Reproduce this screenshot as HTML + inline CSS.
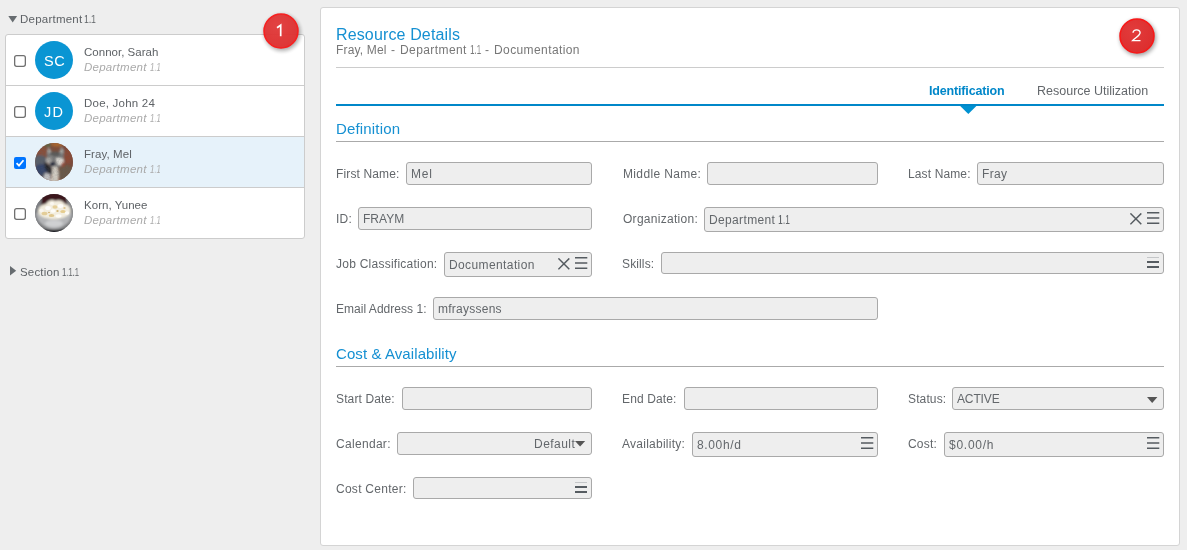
<!DOCTYPE html>
<html><head><meta charset="utf-8"><title>Resource Details</title>
<style>
*{box-sizing:border-box;margin:0;padding:0}
html,body{width:1187px;height:550px;overflow:hidden;background:#eee;font-family:"Liberation Sans",sans-serif}
.a{position:absolute;display:block}
.t{position:absolute;white-space:nowrap;line-height:1;will-change:transform}
.inp{position:absolute;background:#eee;border:1px solid #a9a9a9;border-radius:3px}
#list{left:5px;top:34px;width:300px;height:205px;background:#fff;border:1px solid #ccc;border-radius:3px}
.sep{position:absolute;left:6px;width:298px;height:1px;background:#ccc}
.cb{position:absolute;left:14px;width:12px;height:12px;border:1px solid #767676;border-radius:2.5px;background:#fff}
.av{position:absolute;left:35px;width:38px;height:38px;border-radius:50%;background:#0a95d3}
#panel{left:320px;top:7px;width:860px;height:539px;background:#fff;border:1px solid #d4d4d4;border-radius:3px}
</style></head><body>
<div class="a" id="list"></div>
<div class="a" style="left:6px;top:137px;width:298px;height:50px;background:#e6f2fa"></div>
<div class="sep" style="top:85px"></div><div class="sep" style="top:136px"></div><div class="sep" style="top:187px"></div>
<svg class="a" style="left:14px;top:55px" width="12" height="12"><rect x=".65" y=".65" width="10.7" height="10.7" rx="2" fill="#fff" stroke="#707070" stroke-width="1.3"/></svg><svg class="a" style="left:14px;top:106px" width="12" height="12"><rect x=".65" y=".65" width="10.7" height="10.7" rx="2" fill="#fff" stroke="#707070" stroke-width="1.3"/></svg><svg class="a" style="left:14px;top:208px" width="12" height="12"><rect x=".65" y=".65" width="10.7" height="10.7" rx="2" fill="#fff" stroke="#707070" stroke-width="1.3"/></svg>
<svg class="a" style="left:14px;top:157px" width="12" height="12" viewBox="0 0 13 13"><rect width="13" height="13" rx="2.2" fill="#0075ff"/><path d="M2.8 6.6l2.6 2.7 4.9-5.8" stroke="#fff" stroke-width="1.9" fill="none"/></svg>
<div class="av" style="top:41px"></div><div class="av" style="top:92px"></div>
<svg class="a" style="left:35px;top:143px" width="38" height="38" viewBox="0 0 38 38">
<defs><clipPath id="cw"><circle cx="19" cy="19" r="18.9"/></clipPath><filter id="fw" x="-20%" y="-20%" width="140%" height="140%"><feGaussianBlur stdDeviation="1"/></filter>
<filter id="nw"><feTurbulence type="fractalNoise" baseFrequency="0.6" numOctaves="2" seed="4"/><feColorMatrix values="0 0 0 0 0.12  0 0 0 0 0.12  0 0 0 0 0.14  1.6 0 0 0 -0.55"/></filter>
<filter id="nl"><feTurbulence type="fractalNoise" baseFrequency="0.7" numOctaves="2" seed="11"/><feColorMatrix values="0 0 0 0 0.95  0 0 0 0 0.93  0 0 0 0 0.88  1.6 0 0 0 -0.62"/></filter></defs>
<g clip-path="url(#cw)"><rect width="38" height="38" fill="#7d4d39"/>
<g filter="url(#fw)">
<rect x="26" y="0" width="14" height="40" fill="#7b4a38"/>
<ellipse cx="22" cy="1.5" rx="6" ry="2.6" fill="#a8652f"/>
<ellipse cx="13" cy="2" rx="3" ry="2" fill="#5e6440"/>
<ellipse cx="7" cy="9" rx="6" ry="5" fill="#88503a"/>
<ellipse cx="31" cy="30" rx="8" ry="8" fill="#6b5846"/>
<ellipse cx="33" cy="13" rx="4" ry="8" fill="#8c4a36"/>
<ellipse cx="5" cy="18" rx="7" ry="6" fill="#595e69"/>
<ellipse cx="6" cy="27" rx="7" ry="6" fill="#36456a"/>
<ellipse cx="11" cy="33" rx="5" ry="4" fill="#4a5265"/>
<path d="M12 8l2-4 3 5 7 0 2.500-5 2.500 3-.5 8-1 6-5 5-6-1-5-7z" fill="#7b7c7c"/>
<path d="M13 4l3 5-3 1.500zM26.500 4l2 6-3.500-.5z" fill="#b4b3ad"/>
<ellipse cx="20" cy="11" rx="5" ry="2.500" fill="#5a5a59"/>
<ellipse cx="16" cy="14" rx="2.500" ry="1.300" fill="#8a8a88"/>
<path d="M11 15l4 0 2 4-3 2-3-2z" fill="#aeaca7"/><path d="M21 15l7 .5 1 4-4 3-3-2z" fill="#e6e2da"/>
<ellipse cx="17.600" cy="21" rx="2.500" ry="2.100" fill="#0e1430"/>
<path d="M9 19l4 2 5 6 1 5-3 0-6-6z" fill="#26262b"/>
<path d="M17.500 23.500l4.500 0 1.500 5 0 12h-8l1-6 .5-5z" fill="#d4cfc4"/>
<path d="M10 30l5 1 1 8-9 0z" fill="#c4c4c6"/>
<ellipse cx="28" cy="21.500" rx="1.600" ry="2.300" fill="#9e4932"/>
</g>
<rect width="38" height="38" filter="url(#nw)" opacity=".3"/>
</g></svg>
<svg class="a" style="left:35px;top:194px" width="38" height="38" viewBox="0 0 38 38">
<defs><clipPath id="cp"><circle cx="19" cy="19" r="18.9"/></clipPath><filter id="fp" x="-20%" y="-20%" width="140%" height="140%"><feGaussianBlur stdDeviation="0.9"/></filter>
<filter id="fq" x="-20%" y="-20%" width="140%" height="140%"><feGaussianBlur stdDeviation="0.6"/></filter></defs>
<g clip-path="url(#cp)"><rect width="38" height="38" fill="#77787a"/>
<g filter="url(#fp)">
<path d="M7 -2h24l1 14h-26z" fill="#3a161b"/>
<path d="M-2 4h8l1 26h-9z" fill="#7d7f83"/>
<path d="M32 4h8v26h-9z" fill="#848587"/>
<path d="M1 19c2 12 11 16 18 16s16-4 18-16z" fill="#b4b5b7"/>
<ellipse cx="19" cy="29.500" rx="9" ry="3.500" fill="#cfd0d2"/>
<path d="M3 34c6 2.500 26 2.500 32 0v6h-32z" fill="#19181a"/>
<path d="M3 18c0-5 4-8 8-8 2-4 7-5 9-3 4-2 8 0 10 3 4 1 6 4 5.500 8-3 6-10 7-16.500 7s-14-1-16-7z" fill="#f3eedf"/>
</g>
<g filter="url(#fq)">
<ellipse cx="9.500" cy="19.500" rx="3" ry="1.800" fill="#e3cd98"/>
<ellipse cx="20" cy="13" rx="2.600" ry="1.700" fill="#e6d09a"/>
<ellipse cx="28" cy="17.500" rx="2.800" ry="1.500" fill="#e5cc8d"/>
<ellipse cx="16.500" cy="21.500" rx="2.800" ry="1.600" fill="#e0c88f"/>
<ellipse cx="23.500" cy="22" rx="3" ry="1.700" fill="#fdfcf8"/>
<ellipse cx="13" cy="14" rx="2.800" ry="2" fill="#fefdfa"/>
<ellipse cx="25.500" cy="12" rx="2.800" ry="1.900" fill="#fefdfa"/>
<ellipse cx="32" cy="19" rx="2.200" ry="1.800" fill="#fcfaf5"/>
<ellipse cx="6.500" cy="16.500" rx="2" ry="1.700" fill="#f9f6ef"/>
<ellipse cx="18" cy="17" rx="2.600" ry="1.700" fill="#fefdf9"/>
<ellipse cx="17" cy="9.500" rx="2" ry="1.500" fill="#fbf8f0"/>
<ellipse cx="22.500" cy="17" rx="1.200" ry=".9" fill="#d2b473"/>
<ellipse cx="14" cy="18.500" rx="1.100" ry=".8" fill="#d6ba7e"/>
<ellipse cx="29.500" cy="14" rx="1.200" ry=".9" fill="#dfc794"/>
</g>
</g></svg>
<svg class="a" style="left:8px;top:16px" width="10" height="8"><path d="M0.3 0h8.8l-4.4 6.4z" fill="#676c70"/></svg>
<svg class="a" style="left:10px;top:266px" width="8" height="11"><path d="M0 0v9.4l6.2-4.7z" fill="#676c70"/></svg>
<div class="a" id="panel"></div>
<div class="a" style="left:336px;top:67px;width:828px;height:1px;background:#ccc"></div>
<div class="a" style="left:336px;top:104px;width:828px;height:2px;background:#0087c9"></div>
<svg class="a" style="left:959.6px;top:106px" width="17" height="9"><path d="M.2 0h16.2l-8.1 8z" fill="#0091d1"/></svg>
<div class="a" style="left:336px;top:141px;width:828px;height:1px;background:#aaa"></div>
<div class="a" style="left:336px;top:366px;width:828px;height:1px;background:#aaa"></div>
<div class="inp" style="left:406px;top:162px;width:186px;height:23px"></div><div class="inp" style="left:707px;top:162px;width:171px;height:23px"></div><div class="inp" style="left:977px;top:162px;width:187px;height:23px"></div><div class="inp" style="left:358px;top:207px;width:234px;height:23px"></div><div class="inp" style="left:704px;top:207px;width:460px;height:25px"></div><div class="inp" style="left:444px;top:252px;width:148px;height:25px"></div><div class="inp" style="left:661px;top:252px;width:503px;height:22px"></div><div class="inp" style="left:433px;top:297px;width:445px;height:23px"></div><div class="inp" style="left:402px;top:387px;width:190px;height:23px"></div><div class="inp" style="left:684px;top:387px;width:194px;height:23px"></div><div class="inp" style="left:952px;top:387px;width:212px;height:23px"></div><div class="inp" style="left:397px;top:432px;width:195px;height:23px"></div><div class="inp" style="left:692px;top:432px;width:186px;height:25px"></div><div class="inp" style="left:944px;top:432px;width:220px;height:25px"></div><div class="inp" style="left:413px;top:477px;width:179px;height:22px"></div>
<svg class="a" style="left:1130.2px;top:213.2px" width="12" height="12" viewBox="0 0 12 12"><path d="M.4 .4L11.3 11.3M11.3 .4L.4 11.3" stroke="#555b60" stroke-width="1.5" fill="none"/></svg><svg class="a" style="left:1147px;top:211.8px" width="13" height="14" viewBox="0 0 13 14"><path d="M0 .75h12.3M0 6h12.3M0 11.3h12.3" stroke="#555b60" stroke-width="1.6" fill="none"/></svg><svg class="a" style="left:557.9px;top:258.4px" width="12" height="12" viewBox="0 0 12 12"><path d="M.4 .4L11.3 11.3M11.3 .4L.4 11.3" stroke="#555b60" stroke-width="1.5" fill="none"/></svg><svg class="a" style="left:574.7px;top:257.2px" width="13" height="14" viewBox="0 0 13 14"><path d="M0 .75h12.3M0 6h12.3M0 11.3h12.3" stroke="#555b60" stroke-width="1.6" fill="none"/></svg><svg class="a" style="left:1147px;top:257px" width="13" height="12" viewBox="0 0 13 12"><path d="M0 .5h12" stroke="#c4c6c8" stroke-width="1"/><path d="M0 4.9h12M0 10h12" stroke="#565c61" stroke-width="2" fill="none"/></svg><svg class="a" style="left:1147.2px;top:396.5px" width="11.4" height="7"><path d="M0 0h10.4l-5.2 6z" fill="#555"/></svg><svg class="a" style="left:575.3px;top:441.2px" width="11.2" height="6.6"><path d="M0 0h10.2l-5.1 5.6z" fill="#555"/></svg><svg class="a" style="left:860.6px;top:437.3px" width="13" height="14" viewBox="0 0 13 14"><path d="M0 .75h12.3M0 6h12.3M0 11.3h12.3" stroke="#555b60" stroke-width="1.6" fill="none"/></svg><svg class="a" style="left:1146.8px;top:437.3px" width="13" height="14" viewBox="0 0 13 14"><path d="M0 .75h12.3M0 6h12.3M0 11.3h12.3" stroke="#555b60" stroke-width="1.6" fill="none"/></svg><svg class="a" style="left:575px;top:482px" width="13" height="12" viewBox="0 0 13 12"><path d="M0 .5h12" stroke="#c4c6c8" stroke-width="1"/><path d="M0 4.9h12M0 10h12" stroke="#565c61" stroke-width="2" fill="none"/></svg>
<div class="t" style="left:20px;top:14.27px;font-size:11.5px;color:#5e6266;letter-spacing:0.234px;">Department</div><div class="t" style="left:84.03px;top:14.27px;font-size:11.5px;color:#5e6266;transform:scaleX(0.745);transform-origin:0 0;">1.1</div><div class="t" style="left:84px;top:47.27px;font-size:11.5px;color:#5e6266;letter-spacing:0.011px;">Connor, Sarah</div><div class="t" style="left:84px;top:98.27px;font-size:11.5px;color:#5e6266;letter-spacing:0.225px;">Doe, John 24</div><div class="t" style="left:84px;top:149.27px;font-size:11.5px;color:#5e6266;letter-spacing:0.078px;">Fray, Mel</div><div class="t" style="left:84px;top:200.27px;font-size:11.5px;color:#5e6266;letter-spacing:0.031px;">Korn, Yunee</div><div class="t" style="left:84px;top:62.27px;font-size:11.5px;color:#aaa;letter-spacing:0.256px;font-style:italic;">Department</div><div class="t" style="left:150.30px;top:62.27px;font-size:11.5px;color:#aaa;transform:scaleX(0.673);transform-origin:0 0;font-style:italic;">1.1</div><div class="t" style="left:84px;top:113.27px;font-size:11.5px;color:#aaa;letter-spacing:0.256px;font-style:italic;">Department</div><div class="t" style="left:150.30px;top:113.27px;font-size:11.5px;color:#aaa;transform:scaleX(0.673);transform-origin:0 0;font-style:italic;">1.1</div><div class="t" style="left:84px;top:164.27px;font-size:11.5px;color:#aaa;letter-spacing:0.256px;font-style:italic;">Department</div><div class="t" style="left:150.30px;top:164.27px;font-size:11.5px;color:#aaa;transform:scaleX(0.673);transform-origin:0 0;font-style:italic;">1.1</div><div class="t" style="left:84px;top:215.27px;font-size:11.5px;color:#aaa;letter-spacing:0.256px;font-style:italic;">Department</div><div class="t" style="left:150.30px;top:215.27px;font-size:11.5px;color:#aaa;transform:scaleX(0.673);transform-origin:0 0;font-style:italic;">1.1</div><div class="t" style="left:20px;top:267.27px;font-size:11.5px;color:#5e6266;letter-spacing:0.173px;">Section</div><div class="t" style="left:61.90px;top:267.27px;font-size:11.5px;color:#5e6266;transform:scaleX(0.664);transform-origin:0 0;">1.1.1</div><div class="t" style="left:44px;top:53.73px;font-size:14.5px;color:#fff;letter-spacing:0.544px;">SC</div><div class="t" style="left:44px;top:104.73px;font-size:14.5px;color:#fff;letter-spacing:1.366px;">JD</div><div class="t" style="left:336px;top:26.96px;font-size:16px;color:#1590d2;letter-spacing:0.138px;">Resource Details</div><div class="t" style="left:336px;top:44.04px;font-size:12px;color:#777;letter-spacing:0.159px;">Fray, Mel</div><div class="t" style="left:391px;top:44.04px;font-size:12px;color:#777;letter-spacing:0.200px;">-</div><div class="t" style="left:400px;top:44.04px;font-size:12px;color:#777;letter-spacing:0.411px;">Department</div><div class="t" style="left:469.68px;top:44.04px;font-size:12px;color:#777;transform:scaleX(0.668);transform-origin:0 0;">1.1</div><div class="t" style="left:485px;top:44.04px;font-size:12px;color:#777;letter-spacing:0.200px;">-</div><div class="t" style="left:494px;top:44.04px;font-size:12px;color:#777;letter-spacing:0.398px;">Documentation</div><div class="t" style="left:929px;top:85.42px;font-size:12.5px;color:#0087c9;letter-spacing:-0.160px;font-weight:bold;">Identification</div><div class="t" style="left:1037px;top:85.42px;font-size:12.5px;color:#63676b;letter-spacing:0.001px;">Resource Utilization</div><div class="t" style="left:336px;top:121.30px;font-size:15px;color:#1590d2;letter-spacing:0.161px;">Definition</div><div class="t" style="left:336px;top:346.30px;font-size:15px;color:#1590d2;letter-spacing:0.086px;">Cost &amp; Availability</div><div class="t" style="left:336px;top:167.84px;font-size:12px;color:#63676b;letter-spacing:0.138px;">First Name:</div><div class="t" style="left:623px;top:167.84px;font-size:12px;color:#63676b;letter-spacing:0.352px;">Middle Name:</div><div class="t" style="left:908px;top:167.84px;font-size:12px;color:#63676b;letter-spacing:0.127px;">Last Name:</div><div class="t" style="left:336px;top:212.84px;font-size:12px;color:#63676b;letter-spacing:0.228px;">ID:</div><div class="t" style="left:623px;top:212.84px;font-size:12px;color:#63676b;letter-spacing:0.285px;">Organization:</div><div class="t" style="left:336px;top:257.84px;font-size:12px;color:#63676b;letter-spacing:0.249px;">Job Classification:</div><div class="t" style="left:622px;top:257.84px;font-size:12px;color:#63676b;letter-spacing:0.126px;">Skills:</div><div class="t" style="left:336px;top:302.84px;font-size:12px;color:#63676b;letter-spacing:0.030px;">Email Address 1:</div><div class="t" style="left:336px;top:392.84px;font-size:12px;color:#63676b;letter-spacing:0.134px;">Start Date:</div><div class="t" style="left:622px;top:392.84px;font-size:12px;color:#63676b;letter-spacing:0.128px;">End Date:</div><div class="t" style="left:908px;top:392.84px;font-size:12px;color:#63676b;letter-spacing:0.123px;">Status:</div><div class="t" style="left:336px;top:437.84px;font-size:12px;color:#63676b;letter-spacing:0.309px;">Calendar:</div><div class="t" style="left:622px;top:437.84px;font-size:12px;color:#63676b;letter-spacing:0.257px;">Availability:</div><div class="t" style="left:908px;top:437.84px;font-size:12px;color:#63676b;letter-spacing:0.196px;">Cost:</div><div class="t" style="left:336px;top:482.84px;font-size:12px;color:#63676b;letter-spacing:0.267px;">Cost Center:</div><div class="t" style="left:411px;top:167.84px;font-size:12px;color:#63676b;letter-spacing:0.828px;">Mel</div><div class="t" style="left:982px;top:167.84px;font-size:12px;color:#63676b;letter-spacing:0.300px;">Fray</div><div class="t" style="left:363px;top:212.84px;font-size:12px;color:#63676b;letter-spacing:0.023px;">FRAYM</div><div class="t" style="left:709px;top:213.84px;font-size:12px;color:#63676b;letter-spacing:0.355px;">Department</div><div class="t" style="left:778.03px;top:213.84px;font-size:12px;color:#63676b;transform:scaleX(0.714);transform-origin:0 0;">1.1</div><div class="t" style="left:449px;top:258.84px;font-size:12px;color:#63676b;letter-spacing:0.390px;">Documentation</div><div class="t" style="left:438px;top:302.84px;font-size:12px;color:#63676b;letter-spacing:0.249px;">mfrayssens</div><div class="t" style="left:957px;top:392.84px;font-size:12px;color:#63676b;letter-spacing:-0.129px;">ACTIVE</div><div class="t" style="left:534px;top:437.84px;font-size:12px;color:#63676b;letter-spacing:0.461px;">Default</div><div class="t" style="left:697px;top:438.84px;font-size:12px;color:#63676b;letter-spacing:0.642px;">8.00h/d</div><div class="t" style="left:949px;top:438.84px;font-size:12px;color:#63676b;letter-spacing:0.742px;">$0.00/h</div>
<svg class="a" style="left:250.7px;top:0.6000000000000014px;opacity:0.96" width="60" height="60" viewBox="250.7 0.6000000000000014 60 60"><defs><filter id="bs1" x="-50%" y="-50%" width="200%" height="200%"><feGaussianBlur stdDeviation="2.3"/></filter><radialGradient id="bg1" cx=".4" cy=".35" r=".7"><stop offset="0" stop-color="#e23b3b"/><stop offset="1" stop-color="#dc2e2e"/></radialGradient></defs><circle cx="281.9" cy="32.4" r="18.05" fill="#000" opacity=".36" filter="url(#bs1)"/><circle cx="280.7" cy="30.6" r="16.95" fill="url(#bg1)" stroke="#f81818" stroke-width="1.6"/><path d="M276.70 27.30L280.40 24.80V35.80" stroke="#fff" stroke-width="1.7" fill="none"/></svg>
<svg class="a" style="left:1106.6px;top:5.5px;opacity:1" width="60" height="60" viewBox="1106.6 5.5 60 60"><defs><filter id="bs2" x="-50%" y="-50%" width="200%" height="200%"><feGaussianBlur stdDeviation="2.3"/></filter><radialGradient id="bg2" cx=".4" cy=".35" r=".7"><stop offset="0" stop-color="#e23b3b"/><stop offset="1" stop-color="#dc2e2e"/></radialGradient></defs><circle cx="1137.8" cy="37.3" r="18.05" fill="#000" opacity=".36" filter="url(#bs2)"/><circle cx="1136.6" cy="35.5" r="16.95" fill="url(#bg2)" stroke="#f81818" stroke-width="1.6"/><path d="M1132.60 32.20c.3-3.6 7.1-3.9 7.1.1 0 2.5-4.4 4.8-7.4 7.8h7.8" stroke="#fff" stroke-width="1.35" fill="none"/></svg>
</body></html>
